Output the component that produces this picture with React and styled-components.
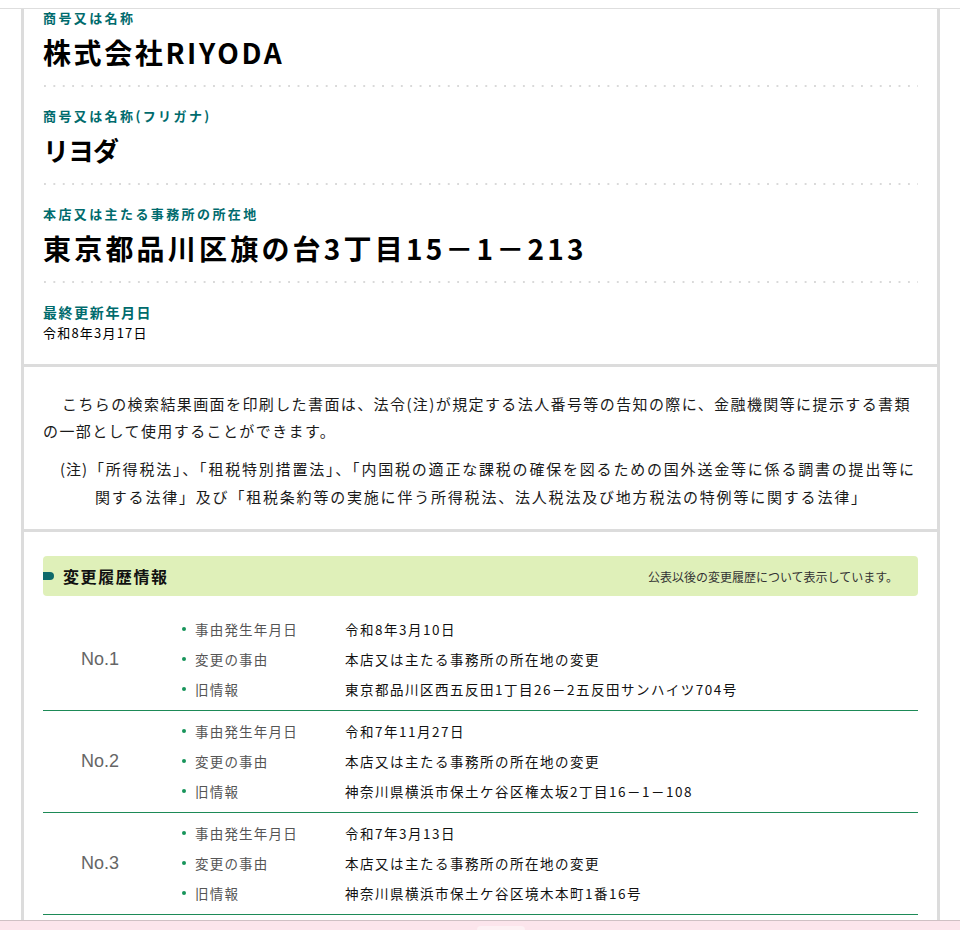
import React from "react";
import styled, { createGlobalStyle } from "styled-components";

const Global = createGlobalStyle`
  html, body { margin: 0; padding: 0; background: #fff; }
  body {
    font-family: "Noto Sans CJK JP", "Noto Sans", sans-serif;
    color: #111;
  }
`;

const TopRule = styled.div`
  height: 8px;
  border-bottom: 1px solid #dedede;
`;

const Panel = styled.div`
  margin-left: 21px;
  width: 919px;
  box-sizing: border-box;
  border-left: 3px solid #dcdcdc;
  border-right: 3px solid #dcdcdc;
`;

const Section = styled.section`
  padding: ${(p) => p.$pad || "0 19px"};
  border-top: ${(p) => (p.$first ? "none" : "3px solid #dcdcdc")};
`;

const Field = styled.div`
  padding-top: ${(p) => (p.$first ? "0" : "18px")};
  padding-bottom: ${(p) => (p.$last ? "22px" : "15px")};
  background-image: ${(p) =>
    p.$last
      ? "none"
      : "linear-gradient(to right, #d9d9d9 2px, transparent 2px)"};
  background-size: 9.4px 2px;
  background-repeat: repeat-x;
  background-position: 1px 100%;
  border-bottom: ${(p) => (p.$last ? "none" : "2px solid transparent")};
`;

const Label = styled.div`
  color: #006b6d;
  font-weight: 700;
  font-size: ${(p) => (p.$big ? "14px" : "13px")};
  letter-spacing: ${(p) => (p.$big ? "1.6px" : "2.4px")};
  line-height: 18px;
`;

const BigValue = styled.div`
  margin-top: 5px;
  font-weight: 700;
  font-size: ${(p) => p.$size || "28px"};
  letter-spacing: ${(p) => p.$ls || "1px"};
  line-height: 40px;
  color: #000;
`;

const SmallValue = styled.div`
  margin-top: 3px;
  font-size: 13px;
  letter-spacing: 1.2px;
  line-height: 18px;
  color: #000;
`;

const Para = styled.p`
  margin: 0;
  font-size: 15px;
  letter-spacing: 1.4px;
  line-height: 27px;
  white-space: nowrap;
  color: #1a1a1a;
`;

const Indent = styled.span`
  padding-left: 19px;
`;

const Note = styled.div`
  display: flex;
  margin-top: 11px;
  padding-left: 17px;
  font-size: 15px;
  letter-spacing: 1.8px;
  line-height: 28px;
  color: #1a1a1a;
`;

const NoteMark = styled.span`
  flex: 0 0 35px;
  white-space: nowrap;
  letter-spacing: 1px;
`;

const NoteText = styled.div`
  text-indent: -6px;
  white-space: nowrap;
`;

const HistHeader = styled.div`
  display: flex;
  align-items: center;
  height: 40px;
  background: #dff0b9;
  border-radius: 4px;
  padding-right: 20px;
`;

const Marker = styled.span`
  width: 11px;
  height: 8px;
  background: #0e6a6a;
  border-radius: 0 4px 4px 0;
  margin-right: 9px;
`;

const HistTitle = styled.h2`
  margin: 0;
  font-size: 16px;
  font-weight: 700;
  letter-spacing: 1.6px;
  color: #111;
  flex: 1;
`;

const HistNote = styled.span`
  font-size: 12px;
  color: #333;
`;

const Rows = styled.div`
  margin-top: 13px;
  padding-bottom: 4px;
`;

const Row = styled.div`
  display: flex;
  align-items: center;
  padding: 5px 0 6px;
  border-bottom: 1px solid #1d8a57;
`;

const NoCell = styled.div`
  flex: 0 0 114px;
  text-align: center;
  font-family: "Liberation Sans", Arial, sans-serif;
  font-size: 18px;
  color: #666;
`;

const Items = styled.dl`
  margin: 0;
  padding-left: 23px;
  display: grid;
  grid-template-columns: 165px 1fr;
  grid-auto-rows: 30px;
  align-items: center;
  font-size: 13.5px;
  letter-spacing: 1.2px;
`;

const Term = styled.dt`
  display: flex;
  align-items: center;
  color: #555;
  &::before {
    content: "";
    width: 4px;
    height: 4px;
    border-radius: 50%;
    background: #17945a;
    margin: 0 9px 0 2px;
  }
`;

const Desc = styled.dd`
  margin: 0;
  color: #111;
  white-space: nowrap;
  letter-spacing: 1.5px;
`;

const Footer = styled.div`
  position: fixed;
  left: 0;
  right: 0;
  bottom: 0;
  height: 9px;
  border-top: 1px solid #cfc0c4;
  background: #fce5ec;
  display: flex;
  justify-content: center;
  align-items: flex-end;
`;

const FooterTab = styled.div`
  width: 48px;
  height: 4px;
  margin-left: 42px;
  background: #fdf1f4;
  border-radius: 5px 5px 0 0;
`;

const history = [
  {
    no: "No.1",
    date: "令和8年3月10日",
    reason: "本店又は主たる事務所の所在地の変更",
    old: "東京都品川区西五反田1丁目26－2五反田サンハイツ704号",
  },
  {
    no: "No.2",
    date: "令和7年11月27日",
    reason: "本店又は主たる事務所の所在地の変更",
    old: "神奈川県横浜市保土ケ谷区権太坂2丁目16－1－108",
  },
  {
    no: "No.3",
    date: "令和7年3月13日",
    reason: "本店又は主たる事務所の所在地の変更",
    old: "神奈川県横浜市保土ケ谷区境木本町1番16号",
  },
];

export default function App() {
  return (
    <>
      <Global />
      <TopRule />
      <Panel>
        <Section $first>
          <Field $first>
            <Label>商号又は名称</Label>
            <BigValue $ls="2.6px">株式会社RIYODA</BigValue>
          </Field>
          <Field>
            <Label>商号又は名称(フリガナ)</Label>
            <BigValue $size="26px" $ls="-1px">リヨダ</BigValue>
          </Field>
          <Field>
            <Label>本店又は主たる事務所の所在地</Label>
            <BigValue $size="28px" $ls="3.2px">東京都品川区旗の台3丁目15－1－213</BigValue>
          </Field>
          <Field $last>
            <Label $big>最終更新年月日</Label>
            <SmallValue>令和8年3月17日</SmallValue>
          </Field>
        </Section>

        <Section $pad="23px 19px 18px">
          <Para>
            <Indent />
            こちらの検索結果画面を印刷した書面は、法令(注)が規定する法人番号等の告知の際に、金融機関等に提示する書類
            <br />
            の一部として使用することができます。
          </Para>
          <Note>
            <NoteMark>(注)</NoteMark>
            <NoteText>
              「所得税法」、「租税特別措置法」、「内国税の適正な課税の確保を図るための国外送金等に係る調書の提出等に
              <br />
              関する法律」及び「租税条約等の実施に伴う所得税法、法人税法及び地方税法の特例等に関する法律」
            </NoteText>
          </Note>
        </Section>

        <Section $pad="24px 19px 20px">
          <HistHeader>
            <Marker />
            <HistTitle>変更履歴情報</HistTitle>
            <HistNote>公表以後の変更履歴について表示しています。</HistNote>
          </HistHeader>
          <Rows>
            {history.map((h) => (
              <Row key={h.no}>
                <NoCell>{h.no}</NoCell>
                <Items>
                  <Term>事由発生年月日</Term>
                  <Desc>{h.date}</Desc>
                  <Term>変更の事由</Term>
                  <Desc>{h.reason}</Desc>
                  <Term>旧情報</Term>
                  <Desc>{h.old}</Desc>
                </Items>
              </Row>
            ))}
          </Rows>
        </Section>
      </Panel>
      <Footer>
        <FooterTab />
      </Footer>
    </>
  );
}
